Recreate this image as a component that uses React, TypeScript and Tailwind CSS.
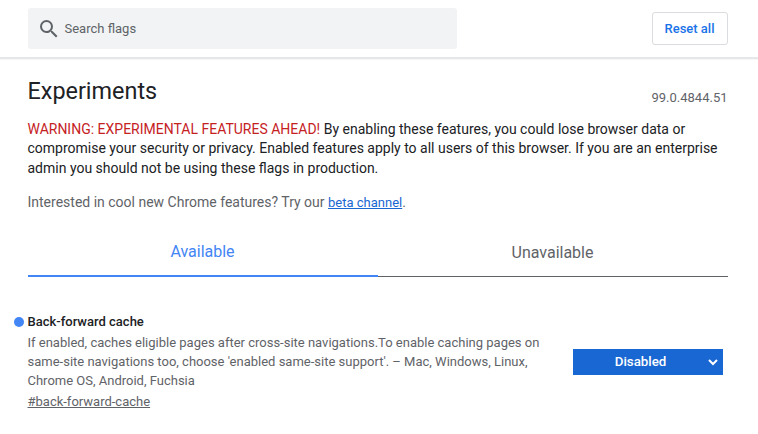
export default function App() {
  return (
    <div className="flex h-[434px] w-[758px] flex-col overflow-hidden bg-white font-[Roboto,sans-serif] text-[13px] text-[#202124]">
      <header className="flex h-[57px] shrink-0 items-center justify-between pr-[30px] pl-7 shadow-[0_2px_0_#e6e7e8,0_3px_1px_#f7f7f7]">
        <div className="flex h-[41px] w-[429px] items-center rounded-[3px] bg-[#f1f3f4] pl-3 text-[#5f6368]">
          <svg width="18" height="18" viewBox="3 3 18 18" fill="#5f6368">
            <path d="M15.5 14h-.79l-.28-.27A6.47 6.47 0 0 0 16 9.5 6.5 6.5 0 1 0 9.5 16c1.61 0 3.09-.59 4.23-1.57l.27.28v.79l5 4.99L20.49 19l-4.99-5zm-6 0a4.5 4.5 0 1 1 0-9 4.5 4.5 0 0 1 0 9z" />
          </svg>
          <span className="ml-[6.5px] pt-px">Search flags</span>
        </div>
        <button className="h-[33px] w-[76px] rounded-[3px] border border-[#dadce0] pr-px font-medium text-[#1a73e8]">Reset all</button>
      </header>
      <main className="flex flex-col pr-[30px] pl-7">
        <div className="flex h-[62px] items-start justify-between">
          <h1 className="mt-[19px] -ml-[0.5px] text-[23.4px] leading-[30px]">Experiments</h1>
          <span className="mt-[32px] mr-[0.5px] leading-[18px] text-[#5f6368]">99.0.4844.51</span>
        </div>
        <p className="-ml-[0.5px] pt-[0.5px] text-[14px] leading-[19.5px] whitespace-nowrap">
          <span className="text-[#c5221f]">WARNING: EXPERIMENTAL FEATURES AHEAD!</span> By enabling these features, you could lose browser data or<br />
          compromise your security or privacy. Enabled features apply to all users of this browser. If you are an enterprise<br />
          admin you should not be using these flags in production.
        </p>
        <p className="mt-[15px] -ml-[0.5px] h-[18px] text-[14px] leading-[18px] text-[#5f6368]">
          Interested in cool new Chrome features? Try our <a className="text-[13px] text-[#1967d2] underline">beta channel</a>.
        </p>
        <div className="mt-4 grid h-[50px] grid-cols-2 text-center text-[16px] leading-[46px]">
          <div className="border-b-2 border-[#4285f4] pt-[2px] pr-px text-[#4285f4]">Available</div>
          <div className="border-b border-[#5f6368] pt-[3px] pr-px text-[#5f6368]">Unavailable</div>
        </div>
        <section className="mt-[35px] flex items-center justify-between pr-[5px]">
          <div className="-ml-[14px] flex">
            <span className="mt-[5px] mr-[3.5px] size-[10px] rounded-full bg-[#4285f4]" />
            <div>
              <h2 className="leading-[20px] font-medium">Back-forward cache</h2>
              <p className="mt-[1px] leading-[19px] whitespace-nowrap text-[#5f6368]">
                If enabled, caches eligible pages after cross-site navigations.To enable caching pages on<br />
                same-site navigations too, choose 'enabled same-site support'. – Mac, Windows, Linux,<br />
                Chrome OS, Android, Fuchsia
              </p>
              <a className="mt-[3px] block leading-[18px] text-[#5f6368] underline">#back-forward-cache</a>
            </div>
          </div>
          <button className="flex h-[26px] w-[150px] items-center bg-[#1967d2] pr-[5px] text-[13.3px] font-medium text-white">
            <span className="flex-1 text-center">Disabled</span>
            <svg width="10" height="8" viewBox="0 0 10 8" fill="none" stroke="white" strokeWidth="2"><path d="M1 2l4 4 4-4" /></svg>
          </button>
        </section>
      </main>
    </div>
  );
}
